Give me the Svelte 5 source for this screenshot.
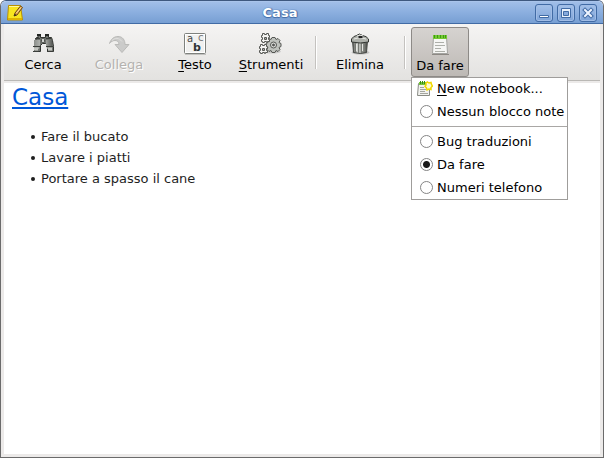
<script>
  let notebook = $state('Da fare');
  const tasks = ['Fare il bucato', 'Lavare i piatti', 'Portare a spasso il cane'];
  const notebooks = ['Bug traduzioni', 'Da fare', 'Numeri telefono'];
</script>

{#snippet choice(name)}
  <label class="item">
    <input type="radio" name="notebook" value={name} bind:group={notebook} />
    <span>{name}</span>
  </label>
{/snippet}

<div class="window">
  <header class="titlebar">
    <svg class="app-icon" width="16" height="16" viewBox="0 0 16 16" aria-hidden="true">
      <path d="M1.500.5h12l2 14.500H.5z" fill="#f8e51f" stroke="#b99000" />
      <path d="M1 13h14v2H1z" fill="#dfb300" />
      <path d="M2 1.500h11" stroke="#fff9a0" />
      <path d="M7 11l1-3L13.500 1l2 1.500L10 10z" fill="#e6a64c" stroke="#6b4713" />
      <path d="M7 11l1-2 1.500 1z" fill="#222" />
      <path d="M9.500 8l4.500-5.500" stroke="#ffe1a2" />
    </svg>
    <span class="title">Casa</span>
    <div class="controls">
      <button aria-label="Riduci a icona">
        <svg width="16" height="16" viewBox="0 0 16 16"><path d="M3.500 10.500h9v2h-9z" fill="#fff" stroke="#416ba5" /></svg>
      </button>
      <button aria-label="Massimizza">
        <svg width="16" height="16" viewBox="0 0 16 16">
          <path d="M3.500 3.500h9v9h-9z" fill="#e9f1fc" stroke="#416ba5" />
          <path d="M5.500 6.500h5v4h-5z" fill="#86a9dc" stroke="#416ba5" />
        </svg>
      </button>
      <button aria-label="Chiudi">
        <svg width="16" height="16" viewBox="0 0 16 16">
          <path d="M5 5l6 6m0-6l-6 6" stroke="#416ba5" stroke-width="4" stroke-linecap="square" />
          <path d="M5 5l6 6m0-6l-6 6" stroke="#edf4ff" stroke-width="2" stroke-linecap="square" />
        </svg>
      </button>
    </div>
  </header>

  <div class="client">
    <nav class="toolbar" aria-label="Strumenti della nota">
      <button class="tool">
        <svg width="24" height="22" viewBox="0 0 24 22" aria-hidden="true">
          <defs>
            <linearGradient id="barrel">
              <stop offset="0" stop-color="#8b8e8a" />
              <stop offset=".5" stop-color="#c2c4c0" />
              <stop offset="1" stop-color="#5c5f5b" />
            </linearGradient>
          </defs>
          <path d="M6.500 2.500h3v2h5v-2h3v2h3l1 3 1 6v5h-6v-6l-2-2h-3l-2 2v6h-6v-5l1-6 1-3h2z" fill="#70736f" stroke="#30332f" />
          <path d="M3 7h6v5l-1 4H3zM15 7h6v9h-5l-1-4z" fill="url(#barrel)" />
          <path d="M6 2h4M14 2h4" stroke="#232623" stroke-width="2" />
          <path d="M4 5.500h5m6 0h5" stroke="#3b3e3a" />
          <path d="M2 18.500h6m8 0h6M2 13.500h7m6 0h7" stroke="#3b3e3a" />
          <path d="M3 16h4m10 0h4" stroke="#c5c7c2" stroke-width="3" />
          <rect x="10.500" y="5.500" width="3" height="4" rx="1" fill="#cfd1ce" stroke="#4a4d49" />
        </svg>
        <span>Cerca</span>
      </button>
      <button class="tool" disabled>
        <svg width="24" height="22" viewBox="0 0 24 22" aria-hidden="true">
          <path d="M2.500 10.500C4 6 7 3.500 11 3.500c5 0 7 4 7 8h4l-7 8-7-8h4c0-3-2-4-4-4-2 0-4 1-5.500 3z" fill="#cbcbca" stroke="#babab8" />
          <path d="M5 7.500c3-3 7-3 10 1" fill="none" stroke="#e0e0de" />
        </svg>
        <span>Collega</span>
      </button>
      <button class="tool">
        <svg width="24" height="22" viewBox="0 0 24 22" aria-hidden="true">
          <path d="M2 21.500h21" stroke="#c2c2c0" />
          <rect x="1.500" y=".5" width="21" height="20" rx="1" fill="#f0f0ef" stroke="#7e817d" />
          <rect x="2.500" y="1.500" width="19" height="18" fill="none" stroke="#fff" />
          <text class="glyph" x="4" y="9">a</text>
          <text class="glyph thin" x="15" y="8">c</text>
          <text class="glyph heavy" x="10" y="18">b</text>
        </svg>
        <span><u>T</u>esto</span>
      </button>
      <button class="tool">
        <svg width="24" height="22" viewBox="0 0 24 22" aria-hidden="true">
          <ellipse cx="13" cy="18.500" rx="9" ry="2" fill="#888" opacity=".3" />
          <g stroke="#555753" stroke-linejoin="round">
            <path d="M13 4.500h3l1 2 2-1 2 2-1 2 2 1v3l-2 1 1 2-2 2-2-1-1 2h-3l-1-2-2 1-2-2 1-2-2-1v-3l2-1-1-2 2-2 2 1z" fill="#bfc2bd" />
            <circle cx="14.500" cy="12" r="3" fill="#dedfdc" />
            <circle cx="14.500" cy="12" r="1" fill="#555" />
            <path d="M3.500.5h2v1h2v-1h2v2h1v2h-1v2h1v2h-2v1h-1v-1h-2v1h-2v-1h-1v-2h1v-2h-1v-2h1z" fill="#f3f3f1" />
            <path d="M1.500 11.500h2v1h2v-1h2v2h1v2h-1v2h1v2h-2v1h-1v-1h-2v1h-2v-1h-1v-2h1v-2h-1v-2h1z" fill="#f3f3f1" />
            <path d="M5.500 4.500h2v2h-2zM3.500 15.500h2v2h-2z" fill="#aaa" />
          </g>
        </svg>
        <span><u>S</u>trumenti</span>
      </button>
      <span class="divider"></span>
      <button class="tool">
        <svg width="24" height="22" viewBox="0 0 24 22" aria-hidden="true">
          <defs>
            <linearGradient id="bin">
              <stop offset="0" stop-color="#555753" />
              <stop offset=".35" stop-color="#d3d5d0" />
              <stop offset="1" stop-color="#4b4d49" />
            </linearGradient>
          </defs>
          <ellipse cx="12.500" cy="19.500" rx="9" ry="2" fill="#777" opacity=".35" />
          <path d="M4.500 7.500h15l-1 12q-6 2-13 0z" fill="url(#bin)" stroke="#444743" />
          <path d="M7.500 10v9m3-9v10m3-10v10m3-10v9" stroke="#767973" />
          <path d="M8.500 11v7m6-7v7" stroke="#e4e5e1" />
          <path d="M3.500 6q2-3 5-3.500 3-3 6 0 4 .5 6 3.500v3q-8 2-17 0z" fill="#aeb1ab" stroke="#343733" />
          <path d="M6 6q6-3 12 0M9 3q3-2 6 0" fill="none" stroke="#e6e7e4" />
          <path d="M10.500 4h4" stroke="#222" stroke-width="2" />
        </svg>
        <span>Elimina</span>
      </button>
      <span class="divider"></span>
      <div class="picker">
        <button class="tool pressed" aria-haspopup="true" aria-expanded="true">
          <svg width="24" height="22" viewBox="0 0 24 22" aria-hidden="true">
            <path d="M4 20.500h17" stroke="#8d8984" />
            <path d="M5.500 2.500h13l1 17h-15z" fill="#f6f6f4" stroke="#a3a39f" />
            <path d="M5 1h14v4H5z" fill="#76c835" />
            <path d="M6.500 1v3m3-3v3m3-3v3m3-3v3m2-3v3" stroke="#3c9d12" />
            <path d="M7 8.500h9m-9 3h10m-10 3h6m-6 3h10" stroke="#adafa9" />
          </svg>
          <span>{notebook}</span>
        </button>
        <div class="menu">
          <button class="item command">
            <svg width="16" height="16" viewBox="0 0 16 16" aria-hidden="true">
              <path d="M1.500 2.500h11v12H.5z" fill="#f2f2ef" stroke="#898b84" />
              <path d="M2 1h9v3H2z" fill="#75c53c" />
              <path d="M3.500 0v3m2-3v3m2-3v3" stroke="#368d13" />
              <path d="M3 6.500h4m-4 2h6m-6 2h5m-5 2h8" stroke="#a4a69f" />
              <path d="M10.500 1l1.500 1 2-.5.500 2 1 1.500-1.500 1.500v2l-2-.5-2 1-.5-2L8 5.500 9 4V2z" fill="#fffbd1" stroke="#f0d800" stroke-width="1.500" />
            </svg>
            <span><u>N</u>ew notebook...</span>
          </button>
          {@render choice('Nessun blocco note')}
          <hr />
          {#each notebooks as name}
            {@render choice(name)}
          {/each}
        </div>
      </div>
    </nav>

    <main class="note">
      <h1>Casa</h1>
      <ul>
        {#each tasks as task}
          <li>{task}</li>
        {/each}
      </ul>
    </main>
  </div>
</div>

<style>
  :global(body) {
    background: #fff;
  }
  .window {
    box-sizing: border-box;
    min-height: 100vh;
    display: flex;
    flex-direction: column;
    border: 1px solid #6b6b6b;
    border-top-color: #3e587f;
    border-radius: 6px 6px 0 0;
    font: 13px/16px 'DejaVu Sans', sans-serif;
    color: #000;
  }
  button {
    margin: 0;
    padding: 0;
    border: 0;
    background: none;
    font: inherit;
    color: inherit;
  }
  svg {
    display: block;
    flex: none;
    fill: none;
  }
  u {
    text-underline-offset: 2px;
  }
  .titlebar {
    box-sizing: border-box;
    height: 23px;
    display: flex;
    align-items: center;
    padding: 0 6px;
    background: linear-gradient(#a1bee8, #8db0e0 45%, #779fd3);
    border-top: 1px solid #a9c4eb;
    border-bottom: 1px solid #416ba5;
    border-radius: 5px 5px 0 0;
  }
  .title {
    flex: 1;
    padding-left: 2px;
    text-align: center;
    color: #fff;
    font-weight: bold;
    text-shadow: 0 0 1px #416ba5, 0 1px 1px #416ba5, 1px 0 1px #416ba5;
  }
  .controls {
    display: flex;
    gap: 4px;
  }
  .controls button {
    border: 1px solid #416ba5;
    border-radius: 3px;
    background: linear-gradient(#a3c0e9, #7fa4d8);
    box-shadow: inset 0 0 0 1px #a1bde6;
  }
  .client {
    flex: 1;
    display: flex;
    flex-direction: column;
    border: 3px solid #eceae9;
    border-top: 0;
  }
  .toolbar {
    display: flex;
    align-items: center;
    height: 56px;
    padding-left: 1px;
    background: linear-gradient(#f5f4f3, #e3e2e0);
    border-bottom: 1px solid #bab8b5;
  }
  .tool {
    width: 76px;
    height: 50px;
    padding-top: 6px;
    display: flex;
    flex-direction: column;
    align-items: center;
    gap: 2px;
  }
  .tool:disabled {
    color: #b4b2af;
    text-shadow: 1px 1px #fff;
  }
  .divider {
    width: 1px;
    height: 33px;
    margin: 0 6px;
    background: #c4c2bf;
    box-shadow: 1px 0 #fff;
  }
  .picker {
    position: relative;
  }
  .tool.pressed {
    width: 58px;
    border: 1px solid #8d8a87;
    border-radius: 3px;
    background: linear-gradient(#d6d3d0, #bdb9b5);
  }
  .glyph {
    font: 10px 'DejaVu Sans', sans-serif;
    fill: #444;
  }
  .thin {
    fill: #777;
  }
  .heavy {
    font-weight: bold;
    font-size: 11px;
    fill: #2e3436;
  }
  .menu {
    position: absolute;
    top: 100%;
    left: 0;
    z-index: 1;
    background: #fff;
    border: 1px solid #9f9d9b;
  }
  .item {
    display: grid;
    grid-template-columns: 16px auto;
    align-items: center;
    justify-items: center;
    justify-content: start;
    column-gap: 4px;
    height: 23px;
    padding: 0 3px 0 5px;
    white-space: nowrap;
  }
  .item.command {
    height: 22px;
  }
  .item span {
    justify-self: start;
  }
  .item input {
    appearance: none;
    box-sizing: border-box;
    width: 13px;
    height: 13px;
    margin: 0;
    justify-self: end;
    border: 1px solid #858585;
    border-radius: 50%;
    background: #fff;
  }
  .item input:checked {
    background: radial-gradient(circle at center, #1a1a1a 3px, #fff 4px);
  }
  hr {
    margin: 3px 0;
    border: 0;
    border-top: 1px solid #a9a7a5;
  }
  .note {
    flex: 1;
    padding: 0 8px;
    background: #fff;
    border-top: 2px solid #eceae9;
  }
  h1 {
    margin: 0;
    font-size: 23px;
    line-height: 28px;
    font-weight: normal;
    color: #0057d8;
    text-decoration: underline;
    text-underline-offset: 2px;
  }
  ul {
    margin: 15px 0 0;
    padding: 0;
    list-style: none;
    line-height: 21px;
    color: #1e1e1e;
  }
  li {
    display: flex;
    align-items: center;
    gap: 6px;
    padding-left: 19px;
  }
  li::before {
    content: '';
    width: 4px;
    height: 4px;
    border-radius: 50%;
    background: #1e1e1e;
  }
</style>
